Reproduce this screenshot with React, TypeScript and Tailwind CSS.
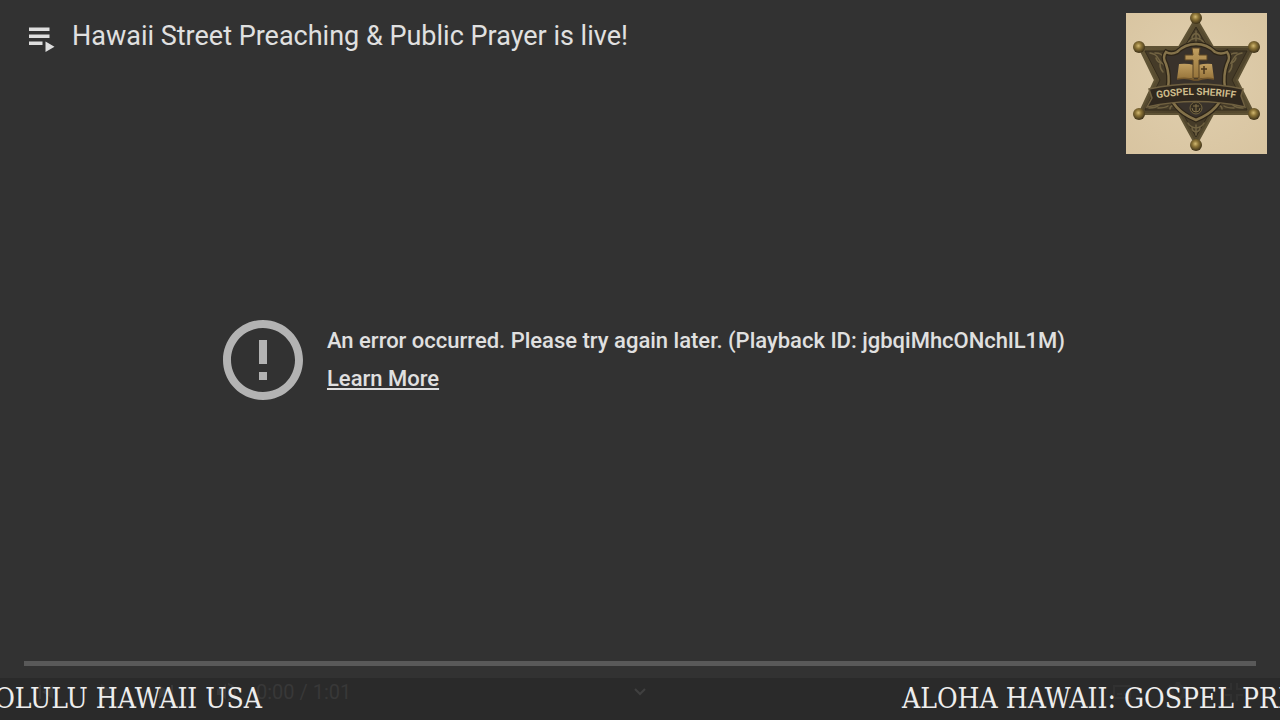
import type { ReactNode } from 'react'

const BALLS = [
  [70, 5],
  [13, 34],
  [128, 34],
  [13, 101],
  [128, 101],
  [70, 132],
]

function PlaylistIcon() {
  return (
    <svg viewBox="0 0 28 26" className="h-[26px] w-7" fill="#dedede" aria-hidden>
      <path d="M1 .5h20.500V4H1zM1 7.500h20.500V11H1zM1 14.500h13.500V18H1zM17.500 14.500v10.500l9-5.250z" />
    </svg>
  )
}

function ErrorIcon() {
  return (
    <svg viewBox="0 0 24 24" className="size-24 shrink-0" fill="#b3b3b3" aria-hidden>
      <path d="M11 15h2v2h-2zm0-8h2v6h-2zm.99-5C6.470 2 2 6.480 2 12s4.470 10 9.990 10C17.520 22 22 17.520 22 12S17.520 2 11.990 2zM12 20c-4.420 0-8-3.580-8-8s3.580-8 8-8 8 3.580 8 8-3.580 8-8 8z" />
    </svg>
  )
}

function SheriffBadge() {
  return (
    <svg viewBox="0 0 141 141" className="size-[141px]" role="img" aria-label="Gospel Sheriff">
      <defs>
        <radialGradient id="paper" cx="50%" cy="45%" r="75%">
          <stop offset="0" stopColor="#e0cfae" />
          <stop offset="1" stopColor="#d8c4a0" />
        </radialGradient>
        <linearGradient id="bronze" x1="0" y1="0" x2="1" y2="1">
          <stop offset="0" stopColor="#6b5d3a" />
          <stop offset="0.5" stopColor="#4c412a" />
          <stop offset="1" stopColor="#5c5032" />
        </linearGradient>
        <radialGradient id="ball" cx="45%" cy="40%" r="60%">
          <stop offset="0" stopColor="#d2b972" />
          <stop offset="0.400" stopColor="#8d7538" />
          <stop offset="1" stopColor="#3b2f17" />
        </radialGradient>
        <linearGradient id="gold" x1="0" y1="0" x2="0" y2="1">
          <stop offset="0" stopColor="#c19f60" />
          <stop offset="1" stopColor="#96743b" />
        </linearGradient>
        <path id="banner-line" d="M22 87Q70 77 118 87" />
      </defs>
      <rect width="141" height="141" fill="url(#paper)" />
      {/* star body */}
      <path
        d="M70 5L87 34H128L111 67L128 101H87L70 132L53 101H13L29 67L13 34H53Z"
        fill="url(#bronze)"
        stroke="#5f5335"
        strokeWidth="2"
        strokeLinejoin="round"
      />
      <path
        d="M70 14L84 38H121L106 67L121 97H85L70 124L55 97H19L34 67L19 38H56Z"
        fill="#453b28"
        stroke="#352c1c"
        strokeWidth="1"
      />
      {/* engraved scrolls on the points */}
      <g fill="none" stroke="#7d6e49" strokeWidth="1.500" strokeLinecap="round" opacity="0.8">
        <path d="M70 18v11M70 20q-4 2-4 5M70 20q4 2 4 5M70 25q-6 1-8 5M70 25q6 1 8 5" />
        <path d="M24 40q6 1 8 5t6 7M29 40q7 0 8 4M30 45q1 4 5 5M34 51q0 5 3 8" />
        <path d="M116 40q-6 1-8 5t-6 7M111 40q-7 0-8 4M110 45q-1 4-5 5M106 51q0 5-3 8" />
        <path d="M23 95q7 0 10-3t9-2M32 95q7 0 10-2M44 96q0-3 4-4" />
        <path d="M117 95q-7 0-10-3t-9-2M108 95q-7 0-10-2M96 96q0-3-4-4" />
        <path d="M70 112v10M70 119q-4-1-4-4M70 119q4-1 4-4M70 115q-6-1-8-5M70 115q6-1 8-5" />
      </g>
      {/* shield */}
      <path
        d="M70 31C61 31 56 34 51 39Q45 42 40 39Q36 44 40 51Q44 62 42 75Q45 97 70 107Q95 97 99 75Q97 62 101 51Q105 44 101 39Q95 42 89 39C84 34 79 31 70 31Z"
        fill="#39322b"
        stroke="#2d2518"
        strokeWidth="5"
      />
      <path
        d="M70 31C61 31 56 34 51 39Q45 42 40 39Q36 44 40 51Q44 62 42 75Q45 97 70 107Q95 97 99 75Q97 62 101 51Q105 44 101 39Q95 42 89 39C84 34 79 31 70 31Z"
        fill="none"
        stroke="#84724a"
        strokeWidth="2.500"
      />
      {/* book and cross */}
      <path d="M53 51q8-1 15 1v14q-8-2-17 0zM72 52q8-2 14-1l2 15q-9-2-16 0z" fill="url(#gold)" />
      <path d="M51 66q9-2 17 1h4q8-3 16-1" fill="none" stroke="#75582c" strokeWidth="1.500" />
      <path
        d="M66 35h8l-1 7h8v5h-8v18h-6V47h-8v-5h8z"
        fill="url(#gold)"
        stroke="#5b4524"
        strokeWidth="1"
      />
      <path d="M78 53v8M75 56h6" stroke="#4b371c" strokeWidth="1.500" />
      {/* small medallion under the banner */}
      <circle cx="70" cy="95" r="6" fill="#352e21" stroke="#74653f" />
      <path d="M70 91v8M67 93h6M66 95q0 4 4 4t4-4" fill="none" stroke="#85734a" />
      {/* banner */}
      <path
        d="M23 76Q70 66 117 76L115 83L119 94Q70 83 21 94L26 85Z"
        fill="#30281e"
        stroke="#6f6040"
        strokeWidth="1.500"
      />
      <text
        fill="#cdbb8b"
        fontSize="10"
        fontWeight="700"
        fontFamily="Roboto, sans-serif"
        textAnchor="middle"
      >
        <textPath href="#banner-line" startOffset="50%">
          GOSPEL SHERIFF
        </textPath>
      </text>
      {BALLS.map(([x, y]) => (
        <circle key={`${x}-${y}`} cx={x} cy={y} r="6" fill="url(#ball)" />
      ))}
    </svg>
  )
}

function ControlButton({ label, children }: { label: string; children: ReactNode }) {
  return (
    <button type="button" aria-label={label} className="flex h-7 w-9 items-center justify-center">
      <svg viewBox="0 0 24 24" className="size-6" fill="currentColor" aria-hidden>
        {children}
      </svg>
    </button>
  )
}

function Controls() {
  return (
    <div className="grid h-[42px] grid-cols-3 items-start px-7 text-[#383838]">
      <div className="flex items-center gap-6">
        <ControlButton label="Previous">
          <path d="M5 5h2v14H5zM19 5v14L8 12z" />
        </ControlButton>
        <ControlButton label="Play">
          <path d="M7 4v16l13-8z" />
        </ControlButton>
        <ControlButton label="Next">
          <path d="M17 5h2v14h-2zM5 5v14l11-7z" />
        </ControlButton>
        <div className="flex items-center gap-3">
          <ControlButton label="Mute">
            <path d="M3 9v6h4l5 5V4L7 9zM14 8v8q3-1 3-4t-3-4zM14 3v2q6 2 6 7t-6 7v2q8-2 8-9t-8-9z" />
          </ControlButton>
          <span className="text-xl whitespace-nowrap">0:00 / 1:01</span>
        </div>
      </div>
      <button type="button" aria-label="More" className="flex h-7 items-center justify-self-center">
        <svg viewBox="0 0 12 8" className="h-2 w-3" fill="none" stroke="#404040" strokeWidth="2" aria-hidden>
          <path d="M1 1l5 5 5-5" />
        </svg>
      </button>
      <div className="flex items-center justify-end gap-5 text-[#313131]">
        <ControlButton label="Subtitles">
          <path d="M3 5h18v14H3zM5 7v10h14V7zM7 13h5v2H7zM14 13h3v2h-3z" />
        </ControlButton>
        <ControlButton label="Settings">
          <path d="M10 2h4l1 3 3 1 3-1 1 4-2 3 2 3-1 4-3-1-3 1-1 3h-4l-1-3-3-1-3 1-1-4 2-3-2-3 1-4 3 1 3-1zM12 8a4 4 0 100 8 4 4 0 000-8z" />
        </ControlButton>
        <ControlButton label="Exit full screen">
          <path d="M8 3h2v7H3V8h5zM14 3h2v5h5v2h-7zM3 14h7v7H8v-5H3zM14 14h7v2h-5v5h-2z" />
        </ControlButton>
      </div>
    </div>
  )
}

function Ticker() {
  return (
    <div className="absolute inset-x-0 bottom-0 flex h-[42px] items-center justify-between overflow-hidden font-['DejaVu_Serif_Condensed','DejaVu_Serif',serif] text-[28px] leading-none whitespace-nowrap text-[#ededed]">
      <div className="flex w-[262px] justify-end">
        <span>HONOLULU HAWAII USA</span>
      </div>
      <div className="w-[378px]">
        <span>ALOHA HAWAII: GOSPEL PREACHING</span>
      </div>
    </div>
  )
}

export default function App() {
  return (
    <div className="relative flex h-screen flex-col overflow-hidden bg-[#323232] font-[Roboto,sans-serif] text-[#e0e0e0]">
      <header className="flex h-[60px] items-start gap-4 pt-4 pl-7">
        <div className="pt-[11px]">
          <PlaylistIcon />
        </div>
        <h1 className="text-[27px] leading-10">Hawaii Street Preaching &amp; Public Prayer is live!</h1>
      </header>

      <div className="absolute top-[13px] right-[13px]">
        <SheriffBadge />
      </div>

      <main className="flex flex-1 items-center justify-center gap-4">
        <ErrorIcon />
        <div className="text-[22px] leading-[38px] font-medium">
          <p>An error occurred. Please try again later. (Playback ID: jgbqiMhcONchlL1M)</p>
          <a href="#" className="underline">
            Learn More
          </a>
        </div>
      </main>

      <footer className="relative h-[60px]">
        <div className="mx-6 mt-px mb-3 h-[5px] bg-[#595959]" role="progressbar" aria-label="Seek" />
        <div className="bg-[#2a2a2a]">
          <Controls />
        </div>
        <Ticker />
      </footer>
    </div>
  )
}
